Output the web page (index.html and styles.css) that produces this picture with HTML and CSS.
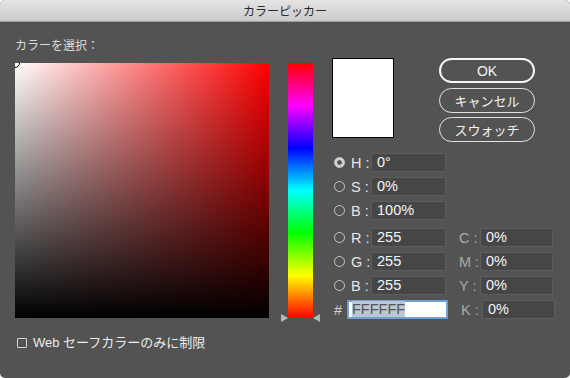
FILE: index.html
```html
<!DOCTYPE html>
<html lang="ja">
<head>
  <meta charset="UTF-8">
  <title>カラーピッカー</title>
  <link rel="stylesheet" href="styles.css">
</head>
<body>

  <div class="dialog">
    <div class="titlebar">カラーピッカー</div>

    <div class="content">
      <div class="heading">カラーを選択：</div>

      <div class="main">
        <!-- saturation / brightness field -->
        <div class="field">
          <div class="field-white"></div>
          <div class="field-black"></div>
          <div class="marker"></div>
        </div>

        <!-- hue slider -->
        <div class="hue">
          <span class="arrow arrow-left"></span>
          <span class="arrow arrow-right"></span>
        </div>

        <div class="panel">
          <div class="panel-top">
            <div class="preview"></div>
            <div class="buttons">
              <button class="btn btn-ok">OK</button>
              <button class="btn">キャンセル</button>
              <button class="btn">スウォッチ</button>
            </div>
          </div>

          <div class="rows">
            <div class="row">
              <span class="radio checked"></span>
              <span class="label">H :</span>
              <span class="input">0°</span>
            </div>
            <div class="row">
              <span class="radio"></span>
              <span class="label">S :</span>
              <span class="input">0%</span>
            </div>
            <div class="row">
              <span class="radio"></span>
              <span class="label">B :</span>
              <span class="input">100%</span>
            </div>

            <div class="row group-start">
              <span class="radio"></span>
              <span class="label">R :</span>
              <span class="input">255</span>
              <span class="label cmyk">C :</span>
              <span class="input small">0%</span>
            </div>
            <div class="row wide">
              <span class="radio"></span>
              <span class="label">G :</span>
              <span class="input">255</span>
              <span class="label cmyk">M :</span>
              <span class="input small">0%</span>
            </div>
            <div class="row wide">
              <span class="radio"></span>
              <span class="label">B :</span>
              <span class="input">255</span>
              <span class="label cmyk">Y :</span>
              <span class="input small">0%</span>
            </div>
            <div class="row wide">
              <span class="hash">#</span>
              <span class="input hex"><span class="selected">FFFFFF</span></span>
              <span class="label cmyk">K :</span>
              <span class="input small">0%</span>
            </div>
          </div>
        </div>
      </div>

      <div class="websafe">
        <span class="checkbox"></span>
        <span>Web セーフカラーのみに制限</span>
      </div>
    </div>
  </div>

</body>
</html>
```

FILE: styles.css
```css
body {
  margin: 0;
  background-color: #ffffff;
  font-family: "Liberation Sans", "Noto Sans CJK JP", sans-serif;
}

.dialog {
  width: 570px;
  height: 378px;
  background-color: #535353;
  border-radius: 5px;
  overflow: hidden;
  color: #ececec;
}

.titlebar {
  height: 22px;
  box-sizing: border-box;
  background: linear-gradient(#e4e4e4, #cbcbcb);
  border-bottom: 1px solid #9e9e9e;
  text-align: center;
  font-family: "Noto Sans CJK JP", sans-serif;
  font-size: 12px;
  line-height: 21px;
  color: #2a2a2a;
}

.content {
  padding: 15px 15px 0 15px;
}

.heading {
  font-family: "Noto Sans CJK JP", sans-serif;
  font-size: 12px;
  line-height: 16px;
  color: #dcdcdc;
  margin-bottom: 5px;
}

.main {
  display: flex;
}

/* colour field */
.field {
  position: relative;
  width: 255px;
  height: 255px;
  margin-top: 5px;
  background-color: #ff0000;
  overflow: hidden;
}

.field-white,
.field-black {
  position: absolute;
  inset: 0;
}

.field-white {
  background: linear-gradient(to right, #ffffff, rgba(255, 255, 255, 0));
}

.field-black {
  background: linear-gradient(to bottom, rgba(0, 0, 0, 0), #000000);
}

.marker {
  position: absolute;
  left: -5px;
  top: -5px;
  width: 8px;
  height: 8px;
  border: 1px solid #000;
  border-radius: 50%;
}

/* hue slider */
.hue {
  position: relative;
  width: 25px;
  height: 255px;
  margin-top: 5px;
  margin-left: 19px;
  background: linear-gradient(to bottom,
    #ff0000 0%, #ff00ff 16.67%, #0000ff 33.33%, #00ffff 50%,
    #00ff00 66.67%, #ffff00 83.33%, #ff0000 100%);
}

.arrow {
  position: absolute;
  bottom: -4px;
  width: 0;
  height: 0;
  border-top: 4.5px solid transparent;
  border-bottom: 4.5px solid transparent;
}

.arrow-left {
  left: -7px;
  border-left: 7px solid #b9b9b9;
}

.arrow-right {
  right: -7px;
  border-right: 7px solid #b9b9b9;
}

/* right panel */
.panel {
  margin-left: 19px;
}

.panel-top {
  display: flex;
  height: 84px;
}

.preview {
  width: 62px;
  height: 80px;
  box-sizing: border-box;
  border: 1px solid #000;
  background-color: #ffffff;
}

.buttons {
  display: flex;
  flex-direction: column;
  gap: 4.5px;
  margin-left: 45px;
}

.btn {
  width: 96px;
  height: 25px;
  box-sizing: border-box;
  padding: 0;
  border: 1.5px solid #e2e2e2;
  border-radius: 13px;
  background: transparent;
  color: #f4f4f4;
  font-family: "Liberation Sans", "Noto Sans CJK JP", sans-serif;
  font-size: 13px;
}

.btn-ok {
  border: 2px solid #f6f6f6;
  font-size: 14px;
}

.rows {
  margin-top: 11px;
  font-size: 14.5px;
}

.row {
  display: flex;
  align-items: center;
  height: 19px;
  margin-bottom: 5px;
}

.row.group-start {
  margin-top: 8px;
}

.row.wide {
  margin-top: 1px;
}

.radio {
  width: 11px;
  height: 11px;
  box-sizing: border-box;
  margin-left: 2px;
  border: 1px solid #c4c4c4;
  border-radius: 50%;
}

.radio.checked {
  background: radial-gradient(circle, #555 0 2px, #cfcfcf 2.5px);
  border-color: #cfcfcf;
}

.label {
  width: 20px;
  padding-left: 6px;
  color: #e6e6e6;
}

.label.cmyk {
  width: 21px;
  padding-left: 13px;
  color: #a9a9a9;
}

.input {
  width: 75px;
  height: 19px;
  box-sizing: border-box;
  padding-left: 5px;
  background-color: #464646;
  border: 1px solid #5e5e5e;
  border-radius: 2px;
  line-height: 17px;
  color: #f4f4f4;
}

.input.small {
  width: 73px;
}

.hash {
  width: 13px;
  margin-left: 2px;
  color: #cfcfcf;
}

.input.hex {
  width: 101px;
  background-color: #ffffff;
  border: 2px solid #6f9fd6;
  border-radius: 1px;
  padding-left: 3px;
  line-height: 15px;
}

.selected {
  background-color: #bcc6d2;
  color: #555;
}

/* web safe checkbox */
.websafe {
  display: flex;
  align-items: center;
  margin-top: 11px;
  font-size: 13px;
  line-height: 16px;
  color: #ececec;
}

.checkbox {
  width: 10px;
  height: 10px;
  box-sizing: border-box;
  margin-left: 2px;
  margin-right: 6px;
  border: 1px solid #d6d6d6;
  border-radius: 1px;
}
```
